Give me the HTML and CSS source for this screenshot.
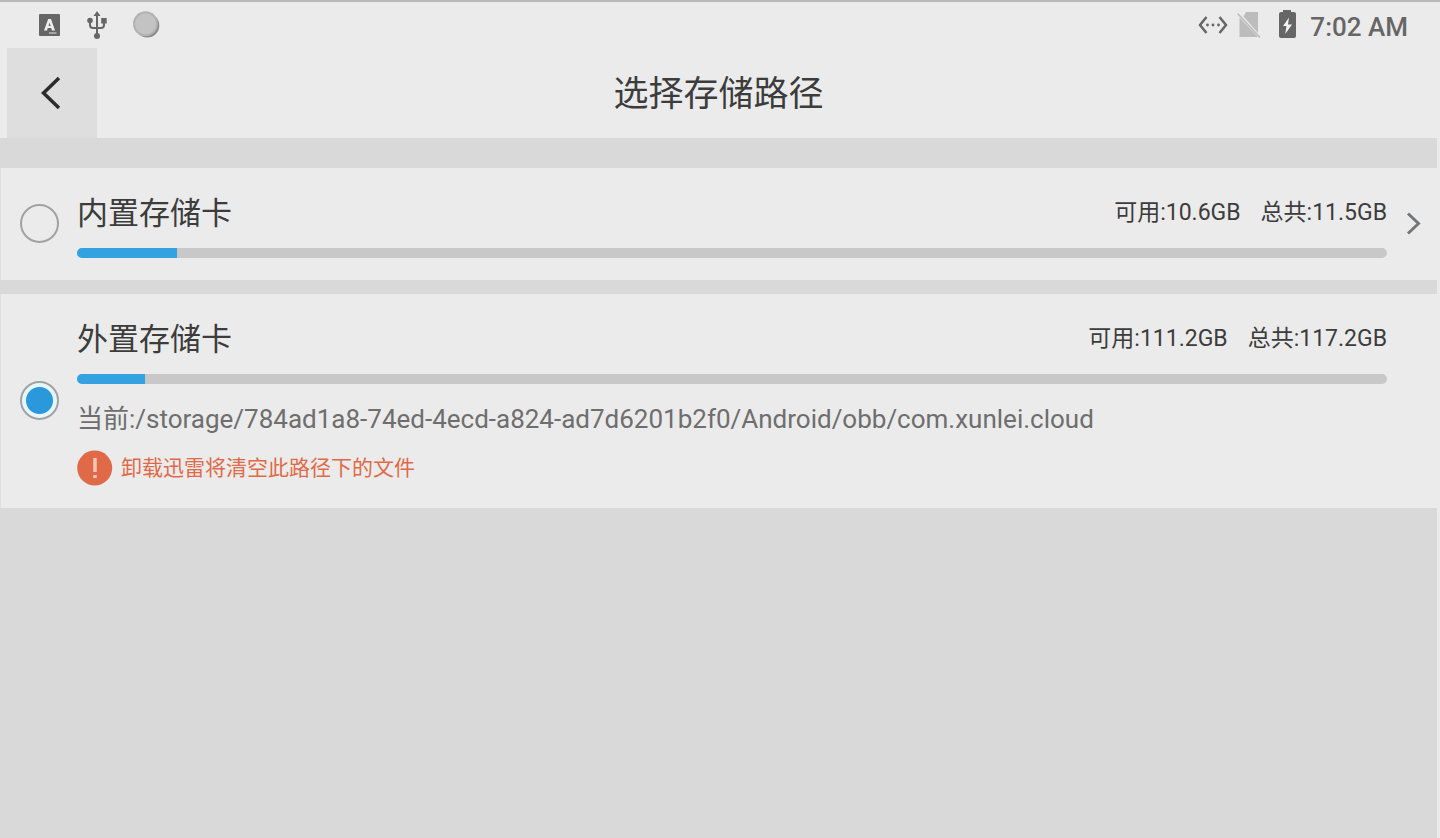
FILE: index.html
```html
<!DOCTYPE html>
<html lang="zh-CN">
<head>
<meta charset="utf-8">
<meta name="viewport" content="width=device-width, initial-scale=1">
<title>选择存储路径</title>
<link rel="stylesheet" href="styles.css">
</head>
<body>
<div class="top">
  <div class="status">
    <div class="status-left">
      <svg width="22" height="24" viewBox="0 0 22 24" aria-hidden="true"><rect x="0" y="1" width="21" height="22" rx="1" fill="#666"/><path d="M5 17.500 9.200 6h2.800l4 11.500h-3L12.300 15H8.700L8 17.500z" fill="#f0f0f0"/><path d="M9.500 13h2.200l-1.100-3.600z" fill="#666"/><path d="M10 20h7.500" stroke="#bbb" stroke-width="1.500"/></svg>
      <svg width="20" height="28" viewBox="0 0 20 28" aria-hidden="true"><g fill="none" stroke="#666" stroke-width="2"><path d="M10 4v21M3 9v5q0 3 3 3h8q3 0 3-3V9"/></g><g fill="#666"><path d="m10 0 3.500 5h-7z"/><circle cx="10" cy="25" r="3"/><circle cx="3" cy="9.500" r="2.800"/><path d="M14.200 7h5.500v5.500h-5.500z"/></g></svg>
      <svg width="28" height="28" viewBox="0 0 28 28" aria-hidden="true"><circle cx="14.300" cy="14.500" r="12" fill="#888"/><circle cx="12.500" cy="12.800" r="12.500" fill="#b2b2b2"/><circle cx="12.500" cy="12.800" r="10.500" fill="#c3c3c3"/></svg>
    </div>
    <div class="status-right">
      <svg width="30" height="20" viewBox="0 0 30 20" aria-hidden="true"><g fill="none" stroke="#666" stroke-width="2.500"><path d="M8.500 2 2 10l6.500 8M21.500 2 28 10l-6.500 8"/></g><g fill="#666"><circle cx="9.500" cy="10" r="1.400"/><circle cx="15" cy="10" r="1.400"/><circle cx="20.500" cy="10" r="1.400"/></g></svg>
      <svg class="sim" width="24" height="26" viewBox="0 0 24 26" aria-hidden="true"><path d="M9 0h12v21L6.500 4.500zM2.500 5.500 21 25H2.500z" fill="#bcbcbc"/><path d="M.8 1.800 23 25.500" stroke="#bcbcbc" stroke-width="1.600"/></svg>
      <svg class="battery" width="17" height="28" viewBox="0 0 17 28" aria-hidden="true"><path d="M4 0h8v2h3q2 0 2 2v22q0 2-2 2H2q-2 0-2-2V4q0-2 2-2h2z" fill="#666"/><path d="M10 7.500 4 16h3.500l-1.300 8L13 14.500H9z" fill="#f4f4f4"/></svg>
      <time class="clock">7:02 AM</time>
    </div>
  </div>
  <header class="header">
    <button class="back" type="button" aria-label="返回">
      <svg width="24" height="34" viewBox="0 0 24 34" aria-hidden="true"><path d="M19 2 3.500 17 19 32" fill="none" stroke="#2c2c2c" stroke-width="3.500"/></svg>
    </button>
    <h1 class="title">选择存储路径</h1>
  </header>
</div>
<main class="list">
  <section class="card">
    <input class="radio" type="radio" name="storage" id="internal">
    <div class="info">
      <div class="row">
        <label class="name" for="internal">内置存储卡</label>
        <div class="stats"><span>可用:10.6GB</span><span>总共:11.5GB</span></div>
      </div>
      <progress class="bar" value="76" max="1000" aria-label="内置存储卡"></progress>
    </div>
    <button class="more" type="button" aria-label="打开">
      <svg width="16" height="24" viewBox="0 0 16 24" aria-hidden="true"><path d="m3 1.500 10.500 10L3 21.500" fill="none" stroke="#73777a" stroke-width="3"/></svg>
    </button>
  </section>
  <section class="card">
    <input class="radio" type="radio" name="storage" id="external" checked>
    <div class="info">
      <div class="row">
        <label class="name" for="external">外置存储卡</label>
        <div class="stats"><span>可用:111.2GB</span><span>总共:117.2GB</span></div>
      </div>
      <progress class="bar" value="52" max="1000" aria-label="外置存储卡"></progress>
      <p class="path">当前:/storage/784ad1a8-74ed-4ecd-a824-ad7d6201b2f0/Android/obb/com.xunlei.cloud</p>
      <p class="warning">
        <svg width="36" height="36" viewBox="0 0 36 36" aria-hidden="true"><circle cx="17.700" cy="18" r="17.500" fill="#e06a48"/><path d="M18 8v14M18 25v3" stroke="#f0c6b4" stroke-width="3.500"/></svg>
        <span>卸载迅雷将清空此路径下的文件</span>
      </p>
    </div>
  </section>
</main>
</body>
</html>
```
FILE: styles.css
```css
* {
  box-sizing: border-box;
}

body {
  margin: 0;
  min-height: 100vh;
  display: flex;
  flex-direction: column;
  background: #ebebeb;
  color: #3c3c3c;
  font-family: Roboto, "Noto Sans CJK SC", sans-serif;
}

button {
  padding: 0;
  border: 0;
  background: none;
  display: flex;
  align-items: center;
  justify-content: center;
}

svg {
  display: block;
  flex: none;
}

.top {
  border-top: 2px solid #b8b8b8;
}

.status {
  height: 46px;
  padding: 0 32px 0 39px;
  display: flex;
  align-items: center;
  justify-content: space-between;
}

.status-left {
  display: flex;
  align-items: center;
  gap: 26px;
}

.status-right {
  display: flex;
  align-items: center;
}

.sim {
  margin-left: 9px;
}

.battery {
  margin: 0 14px 2px 18px;
}

.clock {
  padding-top: 4px;
  color: #666;
  font-size: 26px;
  font-weight: 500;
  line-height: 32px;
}

.header {
  display: grid;
  grid-template-columns: 90px 1fr 90px;
  align-items: center;
  padding: 0 10px 0 7px;
}

.back {
  height: 90px;
  background: #dedede;
}

.title {
  margin: 0;
  padding-top: 4px;
  text-align: center;
  font-size: 35px;
  font-weight: 400;
  line-height: 48px;
}

.list {
  flex: 1;
  margin-right: 3px;
  padding-top: 30px;
  display: flex;
  flex-direction: column;
  gap: 14px;
  background: #d9d9d9;
}

.card {
  display: grid;
  grid-template-columns: 39px 1fr 16px;
  gap: 18px;
  align-items: center;
  padding: 22px 16px 22px 19px;
  border-left: 1px solid #e0e0e0;
  background: #ebebeb;
}

.radio {
  appearance: none;
  width: 39px;
  height: 39px;
  margin: 0 0 2px;
  border: 2px solid #a2a2a2;
  border-radius: 50%;
}

.radio:checked {
  background: radial-gradient(circle, #2b98dc 13px, #e6f6fc 14px);
}

.row {
  height: 46px;
  display: flex;
  align-items: center;
  justify-content: space-between;
}

.name {
  padding-top: 2px;
  font-size: 31px;
  line-height: 44px;
}

.stats {
  display: flex;
  gap: 20px;
  font-size: 23px;
  line-height: 34px;
}

.bar {
  appearance: none;
  display: block;
  width: 100%;
  height: 10px;
  margin-top: 12px;
  border: 0;
  border-radius: 5px;
  overflow: hidden;
  background: #c8c8c8;
}

.bar::-webkit-progress-bar {
  background: #c8c8c8;
}

.bar::-webkit-progress-value {
  background: #34a2e0;
}

.path {
  margin: 18px 0 14px;
  color: #6e6e6e;
  font-size: 26px;
  line-height: 34px;
}

.warning {
  margin: 0;
  display: flex;
  align-items: center;
  gap: 8px;
  color: #e06a48;
  font-size: 21px;
  line-height: 36px;
}
```
